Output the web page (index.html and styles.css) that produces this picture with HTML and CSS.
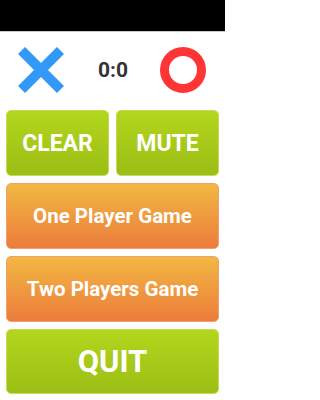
FILE: index.html
```html
<!DOCTYPE html>
<html>
<head>
<meta charset="utf-8">
<meta name="viewport" content="width=225">
<link rel="stylesheet" href="styles.css">
</head>
<body>
<div class="app">
<div class="statusbar"></div>
<div class="header">
  <svg class="icon" viewBox="0 0 46 46" width="46" height="46">
    <line x1="3.5" y1="3.5" x2="42.5" y2="42.5" stroke="#3399f7" stroke-width="10"/>
    <line x1="42.5" y1="3.5" x2="3.5" y2="42.5" stroke="#3399f7" stroke-width="10"/>
  </svg>
  <div class="score">0:0</div>
  <svg class="icon" viewBox="0 0 46 46" width="46" height="46">
    <circle cx="23" cy="23" r="18.5" fill="none" stroke="#ff3535" stroke-width="9"/>
  </svg>
</div>
<div class="menu">
  <div class="row">
    <div class="btn green big">CLEAR</div>
    <div class="btn green big">MUTE</div>
  </div>
  <div class="btn orange mid">One Player Game</div>
  <div class="btn orange mid">Two Players Game</div>
  <div class="btn green huge">QUIT</div>
</div>
</div>
</body>
</html>
```
FILE: styles.css
```css
html, body {
  margin: 0;
  padding: 0;
  background: #fff;
  font-family: Roboto, "Liberation Sans", sans-serif;
}
.app {
  width: 225px;
  height: 400px;
  overflow: hidden;
}
.statusbar {
  height: 31px;
  background: #000;
  border-bottom: 1px solid #c8c8c8;
}
.header {
  display: flex;
  align-items: center;
  justify-content: space-between;
  padding: 15px 19px 0 18px;
  height: 46px;
}
.icon {
  display: block;
}
.score {
  font-weight: bold;
  font-size: 21px;
  color: #333;
  margin-left: 2px;
}
.menu {
  display: flex;
  flex-direction: column;
  gap: 7px;
  padding: 17px 6px 0 6px;
}
.row {
  display: flex;
  gap: 7px;
}
.row .btn {
  flex: 1;
  height: 66px;
}
.btn {
  height: 64px;
  border-radius: 5px;
  display: flex;
  align-items: center;
  justify-content: center;
  color: #fff;
  font-weight: bold;
  box-sizing: border-box;
}
.green {
  background: linear-gradient(#b3d61d, #9cbe15);
  border: 1px solid #c2dc5a;
}
.orange {
  background: linear-gradient(#f2b842, #ec7c3c);
  border: 1px solid #f0a070;
  height: 66px;
}
.big {
  font-size: 23px;
}
.mid {
  font-size: 20.5px;
}
.huge {
  font-size: 31px;
  height: 65px;
}
```
